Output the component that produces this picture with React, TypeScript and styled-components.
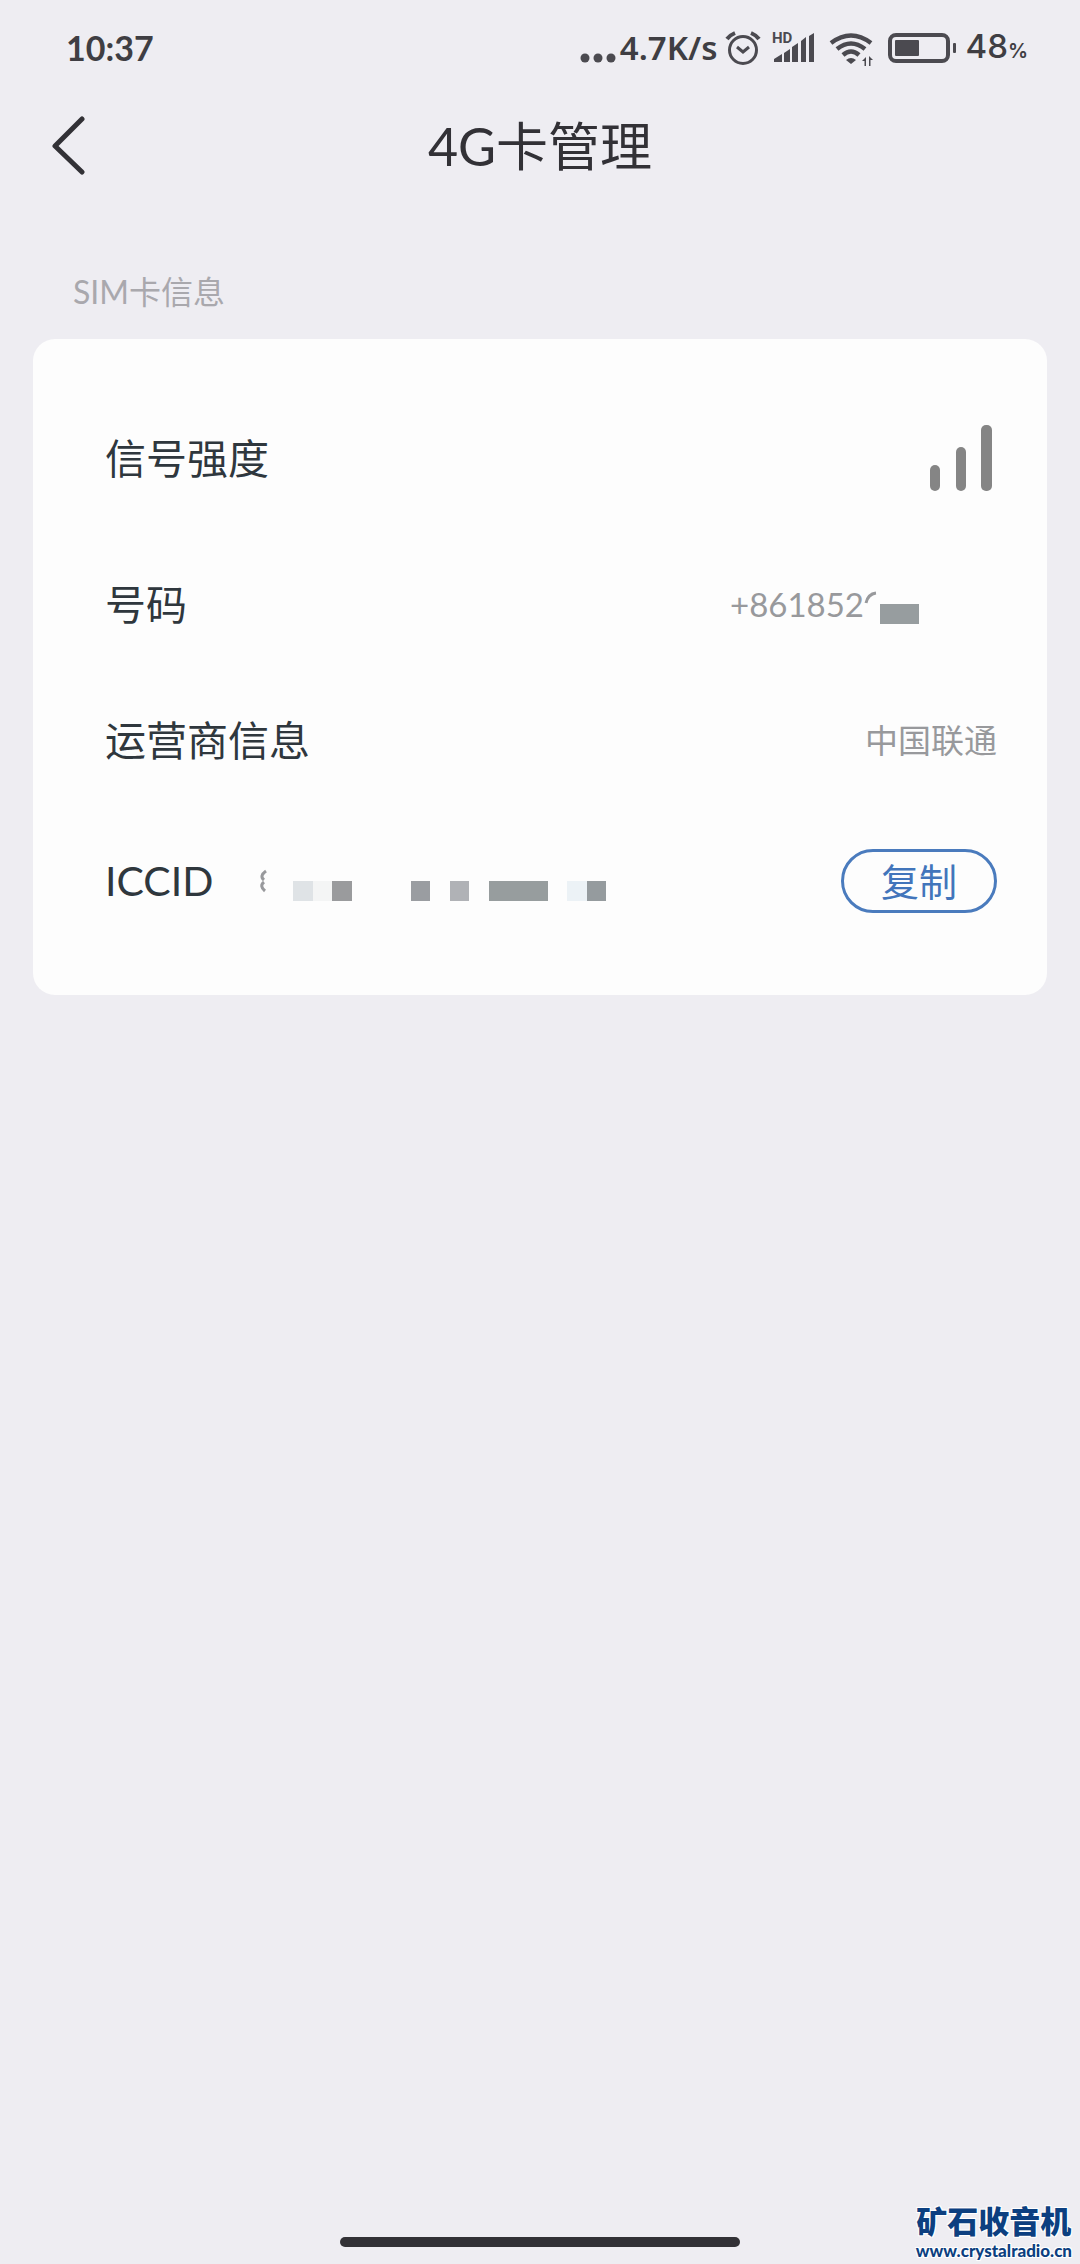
import React from 'react';
import styled, { createGlobalStyle } from 'styled-components';

const GlobalStyle = createGlobalStyle`
  *, *::before, *::after { box-sizing: border-box; }
  body {
    margin: 0;
    background: #eeedf2;
    color: #323136;
    font-family: Lato, 'Noto Sans CJK SC', sans-serif;
  }
  h1, h2, dl, dt, dd, p { margin: 0; font-weight: 400; }
`;

const Screen = styled.div`
  position: relative;
  display: flex;
  flex-direction: column;
  min-height: 100vh;
`;

const StatusBar = styled.header`
  display: flex;
  align-items: center;
  justify-content: space-between;
  height: 96px;
  padding: 0 52px 0 66px;
  color: #3f3e43;
  font-weight: 700;
  line-height: 40px;
`;

const Clock = styled.time`
  font-size: 34px;
`;

const StatusGroup = styled.div`
  display: flex;
  align-items: center;

  svg { display: block; flex: none; }
`;

const Speed = styled.span`
  margin: 0 8px 0 4px;
  font-family: 'Noto Sans', sans-serif;
  font-size: 33px;
  font-weight: 600;
`;

const Battery = styled.span`
  margin-left: 8px;
  font-family: Inter, sans-serif;
  font-size: 33px;
  font-weight: 500;

  small {
    font-size: 20px;
    font-weight: 600;
  }
`;

const TitleBar = styled.nav`
  display: grid;
  grid-template-columns: 104px 1fr 104px;
  align-items: center;
  height: 100px;
`;

const BackButton = styled.button`
  display: flex;
  justify-content: flex-end;
  padding: 0 18px 0 0;
  border: 0;
  background: none;
  color: inherit;
  cursor: pointer;
`;

const Title = styled.h1`
  font-size: 52px;
  line-height: 76px;
  text-align: center;
`;

const Content = styled.main`
  flex: 1;
  padding: 72px 33px 0;
`;

const SectionTitle = styled.h2`
  padding: 0 40px;
  margin-bottom: 23px;
  color: #a9a8ad;
  font-size: 32px;
  line-height: 48px;
`;

const Card = styled.dl`
  padding: 47px 50px 37px 72px;
  border-radius: 22px;
  background: #fdfdfd;
`;

const Row = styled.div<{ $height: number }>`
  display: flex;
  align-items: center;
  height: ${({ $height }) => $height}px;
`;

const Label = styled.dt`
  color: #2f373d;
  font-size: 41px;
  line-height: 60px;
`;

const Value = styled.dd<{ $inset?: number }>`
  display: flex;
  align-items: center;
  margin-left: auto;
  padding: 0 ${({ $inset = 0 }) => $inset}px 3px 0;
  color: #98999c;
  font-size: 33px;
  line-height: 48px;
`;

const Iccid = styled.dd`
  display: flex;
  flex: 1;
  align-items: center;
  margin-left: 46px;
`;

const Mosaic = styled.span<{ $width: number }>`
  display: flex;
  width: ${({ $width }) => $width}px;
  padding-top: 20px;
`;

const Tile = styled.i<{ $color: string; $span?: number }>`
  flex: ${({ $span = 1 }) => $span} 0 0;
  height: 20px;
  background: ${({ $color }) => $color};
`;

const CopyButton = styled.button`
  width: 156px;
  height: 64px;
  border: 3px solid #4a7bbd;
  border-radius: 32px;
  background: transparent;
  color: #4275bb;
  font-family: inherit;
  font-size: 38px;
  line-height: 56px;
  padding: 0;
  cursor: pointer;
`;

const HomeArea = styled.footer`
  display: flex;
  justify-content: center;
  padding-bottom: 17px;
`;

const HomeIndicator = styled.div`
  width: 37%;
  height: 10px;
  border-radius: 5px;
  background: #323136;
`;

const Watermark = styled.div`
  position: absolute;
  right: 8px;
  bottom: 2px;
  color: #0c3f80;
  text-align: center;
  text-shadow: 1px 1px #fff, -1px -1px #fff, 1px -1px #fff, -1px 1px #fff;
`;

const WatermarkName = styled.p`
  font-size: 31px;
  font-weight: 900;
  line-height: 38px;
`;

const WatermarkUrl = styled.p`
  font-size: 17px;
  font-weight: 900;
  line-height: 22px;
`;

const TILES: { color: string; span?: number }[] = [
  { color: '#dfe3e6' },
  { color: '#f4f5f5' },
  { color: '#9a9b9d' },
  { color: 'transparent', span: 3 },
  { color: '#9a9da1' },
  { color: 'transparent' },
  { color: '#b0b2b6' },
  { color: 'transparent' },
  { color: '#979d9e', span: 3 },
  { color: 'transparent' },
  { color: '#ecf2f6' },
  { color: '#959b9e' },
];

const StatusIcons = () => (
  <svg width="232" height="40" viewBox="728 28 232 40" fill="none" stroke="#4b4a50" aria-hidden="true">
    <circle cx="746" cy="50" r="13.5" strokeWidth="3" />
    <path d="M740 47l6 5 6-5" strokeWidth="3" />
    <path d="M730 39q3-4 8-6M762 39q-3-4-8-6" strokeWidth="4" />
    <g fill="#4b4a50" stroke="none">
      <path d="M777 62v-3l8-5v8zM787 53l6-4v13h-6zM795 47l6-4v19h-6zM804 41l5-4v25h-5zM812 36l5-3v29h-5z" />
      <path d="M849 60q5-4 10 0l-5 4z" />
      <path d="M865 61l4-4v9h-1.500v-5zM876 60l-4-4v10h1.500v-6z" />
      <rect x="898" y="40" width="24" height="16" rx="1" />
      <rect x="956" y="43" width="3" height="10" rx="1" />
    </g>
    <text x="775" y="43" fontSize="15" fontFamily="Roboto, sans-serif" fontWeight="700" fill="#4b4a50" stroke="none">HD</text>
    <path d="M834 43q20-15 40 0M840 49q14-11 28 0M846 55q8-7 16 0" strokeWidth="4.500" />
    <rect x="893" y="35" width="58" height="26" rx="6" strokeWidth="4" />
  </svg>
);

const Dots = () => (
  <svg width="36" height="40" viewBox="0 0 36 40" fill="#4b4a50" aria-hidden="true">
    <circle cx="5" cy="30" r="4.500" />
    <circle cx="18" cy="30" r="4.500" />
    <circle cx="31" cy="30" r="4.500" />
  </svg>
);

export default function App() {
  return (
    <>
      <GlobalStyle />
      <Screen>
        <StatusBar>
          <Clock>10:37</Clock>
          <StatusGroup>
            <Dots />
            <Speed>4.7K/s</Speed>
            <StatusIcons />
            <Battery>48<small>%</small></Battery>
          </StatusGroup>
        </StatusBar>

        <TitleBar>
          <BackButton type="button" aria-label="返回">
            <svg width="34" height="60" viewBox="0 0 34 60" fill="none" stroke="#323136" strokeWidth="5" strokeLinecap="round" strokeLinejoin="round">
              <path d="M30 3L3 30l27 26" />
            </svg>
          </BackButton>
          <Title>4G卡管理</Title>
        </TitleBar>

        <Content>
          <SectionTitle>SIM卡信息</SectionTitle>
          <Card>
            <Row $height={146}>
              <Label>信号强度</Label>
              <Value>
                <svg width="68" height="68" viewBox="0 0 68 68" fill="#858585" role="img" aria-label="信号">
                  <rect x="1" y="41" width="10" height="26" rx="5" />
                  <rect x="27" y="23" width="10" height="44" rx="5" />
                  <rect x="52" y="1" width="11" height="66" rx="5" />
                </svg>
              </Value>
            </Row>
            <Row $height={146}>
              <Label>号码</Label>
              <Value $inset={78}>
                +861852
                <svg width="16" height="26" viewBox="0 0 16 26" fill="none" stroke="#98999c" strokeWidth="3" aria-hidden="true">
                  <path d="M2 12Q4 3 12 2" />
                </svg>
                <Mosaic $width={39}>
                  <Tile $color="#979d9f" />
                </Mosaic>
              </Value>
            </Row>
            <Row $height={126}>
              <Label>运营商信息</Label>
              <Value>中国联通</Value>
            </Row>
            <Row $height={154}>
              <Label>ICCID</Label>
              <Iccid>
                <svg width="34" height="24" viewBox="0 0 34 24" fill="none" stroke="#98999c" strokeWidth="3" aria-hidden="true">
                  <path d="M7 2Q0 7 5 11M5 13Q0 17 6 22" />
                </svg>
                <Mosaic $width={313}>
                  {TILES.map((tile, index) => (
                    <Tile key={index} $color={tile.color} $span={tile.span} />
                  ))}
                </Mosaic>
              </Iccid>
              <CopyButton type="button">复制</CopyButton>
            </Row>
          </Card>
        </Content>

        <HomeArea>
          <HomeIndicator />
        </HomeArea>
        <Watermark>
          <WatermarkName>矿石收音机</WatermarkName>
          <WatermarkUrl>www.crystalradio.cn</WatermarkUrl>
        </Watermark>
      </Screen>
    </>
  );
}
